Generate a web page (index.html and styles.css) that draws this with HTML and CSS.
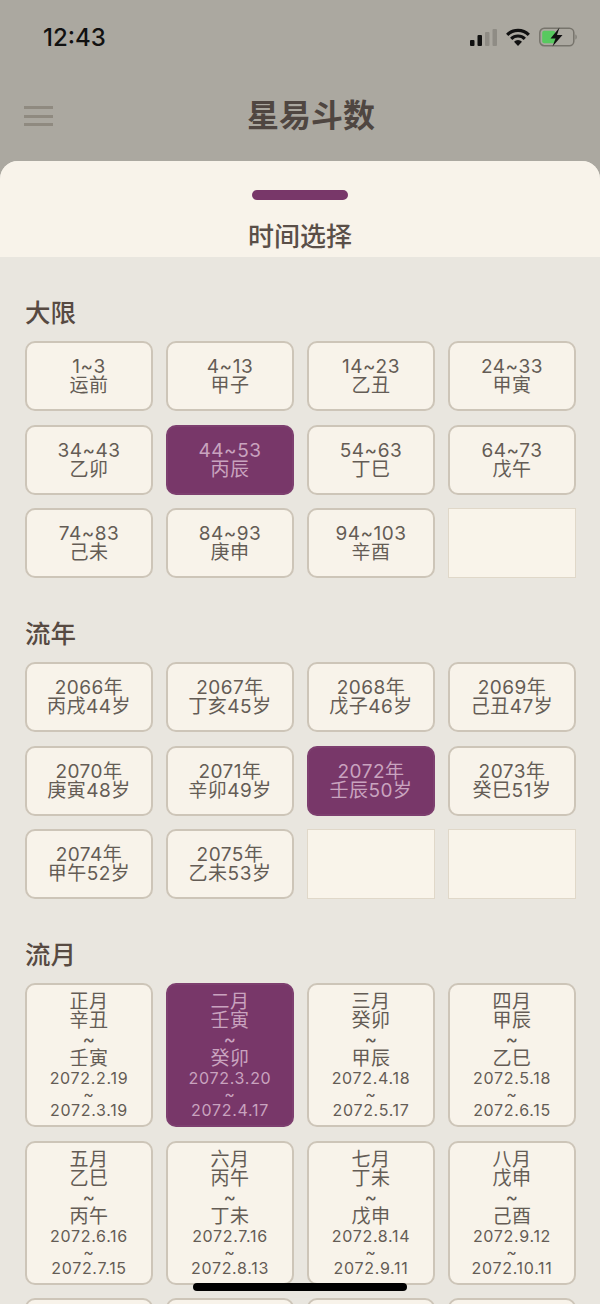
FILE: index.html
```html
<!DOCTYPE html>
<html lang="zh-CN">
<head>
  <meta charset="UTF-8">
  <title>星易斗数</title>
  <link rel="stylesheet" href="styles.css">
</head>
<body>

<div class="app">
  <div class="topbar">
    <div class="status">
      <span class="time">12:43</span>
      <div class="status-icons">
        <svg width="27" height="18" viewBox="0 0 27 18">
          <rect x="0" y="12" width="4.500" height="6" rx="1" fill="#111"/>
          <rect x="7.500" y="7" width="4.500" height="11" rx="1" fill="#111"/>
          <rect x="15" y="4" width="4.500" height="14" rx="1" fill="#8f8c85"/>
          <rect x="22.500" y="1" width="4.500" height="17" rx="1" fill="#8f8c85"/>
        </svg>
        <svg width="24" height="18" viewBox="0 0 24 18">
          <path d="M1.200 6.800a15.300 15.300 0 0 1 21.600 0" fill="none" stroke="#111" stroke-width="3.200"/>
          <path d="M5.200 10.800a9.600 9.600 0 0 1 13.600 0" fill="none" stroke="#111" stroke-width="3.200"/>
          <path d="M12 18l-4-4.300a5.600 5.600 0 0 1 8 0z" fill="#111"/>
        </svg>
        <svg width="38" height="20" viewBox="0 0 38 20">
          <rect x="0.800" y="1.300" width="34" height="17.400" rx="4.500" fill="none" stroke="#77746c" stroke-width="1.500"/>
          <rect x="3.200" y="3.800" width="13" height="12.400" rx="2" fill="#58c95f"/>
          <path d="M36.500 7.500c1.500.5 1.500 4.500 0 5z" fill="#77746c"/>
          <path d="M20.500 0.500l-9 11h5l-3 8 10-11.500h-5.500z" fill="#111"/>
        </svg>
      </div>
    </div>
    <div class="nav">
      <div class="menu"><i></i><i></i><i></i></div>
      <h1>星易斗数</h1>
    </div>
  </div>

  <div class="sheet">
    <div class="sheet-head">
      <div class="handle"></div>
      <h2>时间选择</h2>
    </div>

    <div class="sections">
      <section>
        <h3>大限</h3>
        <div class="grid">
          <div class="cell">1~3<br>运前</div>
          <div class="cell">4~13<br>甲子</div>
          <div class="cell">14~23<br>乙丑</div>
          <div class="cell">24~33<br>甲寅</div>
          <div class="cell">34~43<br>乙卯</div>
          <div class="cell active">44~53<br>丙辰</div>
          <div class="cell">54~63<br>丁巳</div>
          <div class="cell">64~73<br>戊午</div>
          <div class="cell">74~83<br>己未</div>
          <div class="cell">84~93<br>庚申</div>
          <div class="cell">94~103<br>辛酉</div>
          <div class="cell empty"></div>
        </div>
      </section>

      <section>
        <h3>流年</h3>
        <div class="grid">
          <div class="cell">2066年<br>丙戌44岁</div>
          <div class="cell">2067年<br>丁亥45岁</div>
          <div class="cell">2068年<br>戊子46岁</div>
          <div class="cell">2069年<br>己丑47岁</div>
          <div class="cell">2070年<br>庚寅48岁</div>
          <div class="cell">2071年<br>辛卯49岁</div>
          <div class="cell active">2072年<br>壬辰50岁</div>
          <div class="cell">2073年<br>癸巳51岁</div>
          <div class="cell">2074年<br>甲午52岁</div>
          <div class="cell">2075年<br>乙未53岁</div>
          <div class="cell empty"></div>
          <div class="cell empty"></div>
        </div>
      </section>

      <section>
        <h3>流月</h3>
        <div class="grid months">
          <div class="cell">正月<br>辛丑<br>~<br>壬寅<small>2072.2.19<br>~<br>2072.3.19</small></div>
          <div class="cell active">二月<br>壬寅<br>~<br>癸卯<small>2072.3.20<br>~<br>2072.4.17</small></div>
          <div class="cell">三月<br>癸卯<br>~<br>甲辰<small>2072.4.18<br>~<br>2072.5.17</small></div>
          <div class="cell">四月<br>甲辰<br>~<br>乙巳<small>2072.5.18<br>~<br>2072.6.15</small></div>
          <div class="cell">五月<br>乙巳<br>~<br>丙午<small>2072.6.16<br>~<br>2072.7.15</small></div>
          <div class="cell">六月<br>丙午<br>~<br>丁未<small>2072.7.16<br>~<br>2072.8.13</small></div>
          <div class="cell">七月<br>丁未<br>~<br>戊申<small>2072.8.14<br>~<br>2072.9.11</small></div>
          <div class="cell">八月<br>戊申<br>~<br>己酉<small>2072.9.12<br>~<br>2072.10.11</small></div>
          <div class="cell"></div>
          <div class="cell"></div>
          <div class="cell"></div>
          <div class="cell"></div>
        </div>
      </section>
    </div>
  </div>

  <div class="home-bar"></div>
</div>

</body>
</html>
```

FILE: styles.css
```css
* {
  margin: 0;
  padding: 0;
  box-sizing: border-box;
}

html, body {
  height: 100%;
  overflow: hidden;
  font-family: "Inter", "Noto Sans CJK SC", sans-serif;
}

.app {
  position: relative;
  width: 600px;
  height: 1304px;
  overflow: hidden;
  background: #aba8a0;
}

/* top area, dimmed behind the sheet */
.topbar {
  height: 161px;
}

.status {
  display: flex;
  justify-content: space-between;
  align-items: center;
  height: 74px;
  padding: 0 23px 0 43px;
}

.time {
  font-size: 24px;
  font-weight: 500;
  color: #111;
}

.status-icons {
  display: flex;
  align-items: center;
  gap: 9px;
}

.nav {
  position: relative;
  display: flex;
  justify-content: center;
  align-items: center;
  height: 84px;
  padding-left: 22px;
}

.menu {
  position: absolute;
  left: 24px;
  top: 32px;
  display: flex;
  flex-direction: column;
  gap: 5.500px;
  width: 29px;
}

.menu i {
  height: 3px;
  background: #8f8a80;
}

h1 {
  font-size: 32px;
  font-weight: 700;
  line-height: 40px;
  color: #4f4641;
}

/* bottom sheet */
.sheet {
  height: 1143px;
  border-radius: 18px 18px 0 0;
  overflow: hidden;
  background: #e9e6df;
}

.sheet-head {
  height: 96px;
  padding-top: 29px;
  background: #f8f3ea;
  text-align: center;
}

.handle {
  width: 96px;
  height: 10px;
  margin: 0 auto;
  border-radius: 5px;
  background: #783769;
}

h2 {
  margin-top: 19px;
  font-size: 26px;
  font-weight: 500;
  line-height: 36px;
  color: #5a4f48;
}

.sections {
  display: flex;
  flex-direction: column;
  gap: 42px;
  padding: 42px 24px 0 25px;
}

h3 {
  margin-bottom: 14px;
  font-size: 25.500px;
  font-weight: 500;
  line-height: 28px;
  color: #574a42;
}

.grid {
  display: grid;
  grid-template-columns: repeat(4, 1fr);
  grid-auto-rows: 70px;
  gap: 13.500px 13px;
}

.months {
  grid-auto-rows: 144px;
}

.cell {
  padding-top: 14px;
  border: 2px solid #cdc5b8;
  border-radius: 10px;
  background: #f8f3ea;
  font-size: 19px;
  line-height: 19px;
  letter-spacing: 0.5px;
  text-align: center;
  color: #645c55;
}

.months .cell {
  padding-top: 7px;
}

.cell small {
  display: block;
  margin-top: 2px;
  font-size: 16px;
  line-height: 16px;
  letter-spacing: 0.700px;
}

.cell.active {
  border-color: #7d3f6f;
  background: #783769;
  color: #c9a3bf;
}

.cell.empty {
  border: 1px solid #e0d8c9;
  border-radius: 0;
  background: #f9f4ea;
}

.home-bar {
  position: absolute;
  left: 193px;
  bottom: 13px;
  width: 214px;
  height: 8px;
  border-radius: 4px;
  background: #000;
}
```
